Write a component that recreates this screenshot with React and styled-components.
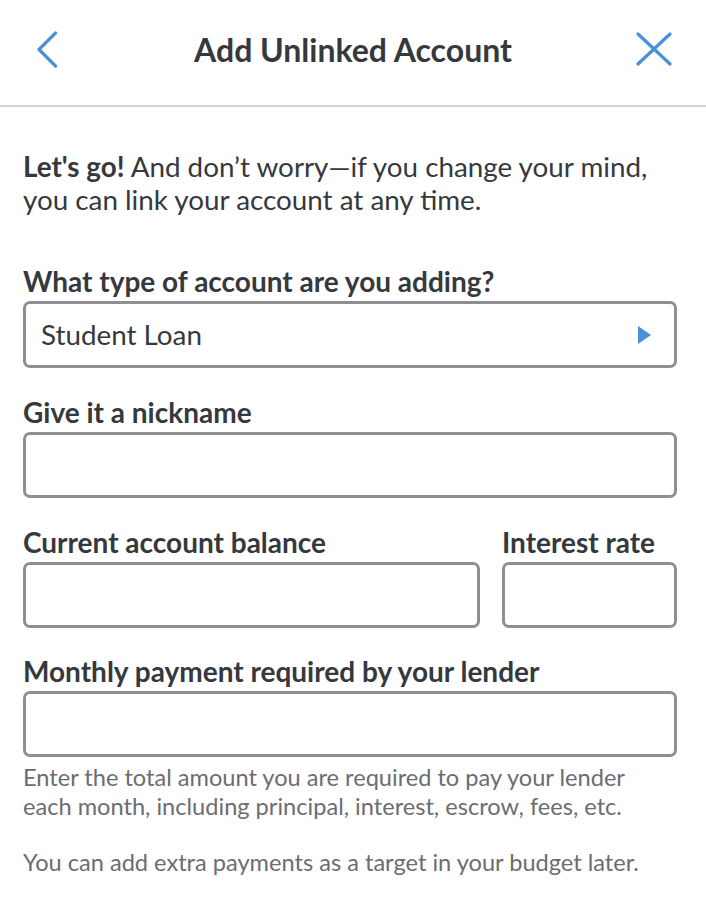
import React from "react";
import styled, { createGlobalStyle } from "styled-components";

const GlobalStyle = createGlobalStyle`
  body {
    margin: 0;
    background: #fff;
    font-family: Lato, "Open Sans", sans-serif;
    color: #35393e;
  }
  * {
    box-sizing: border-box;
  }
`;

const Header = styled.header`
  height: 107px;
  padding-bottom: 7px;
  border-bottom: 2px solid #d5d5d9;
  display: grid;
  grid-template-columns: 80px 1fr 80px;
  align-items: center;
`;

const IconButton = styled.button`
  border: none;
  background: none;
  padding: 0;
  height: 40px;
  display: flex;
  align-items: center;
  justify-content: ${(p) => (p.$right ? "flex-end" : "flex-start")};
  padding-left: ${(p) => (p.$right ? "0" : "36px")};
  padding-right: ${(p) => (p.$right ? "34px" : "0")};
  cursor: pointer;
`;

const Title = styled.h1`
  margin: 0;
  text-align: center;
  font-size: 32px;
  font-weight: 700;
  color: #35393e;
  white-space: nowrap;
`;

const Content = styled.main`
  padding: 43px 29px 40px 23px;
`;

const Intro = styled.p`
  margin: 0 0 50px;
  font-size: 27.8px;
  line-height: 33px;
  strong {
    font-weight: 700;
  }
`;

const Field = styled.div`
  display: flex;
  flex-direction: column;
  flex: ${(p) => p.$grow || "none"};
  width: ${(p) => p.$width || "auto"};
`;

const Row = styled.div`
  display: flex;
  gap: 22px;
  margin-bottom: 28px;
`;

const Group = styled.div`
  margin-bottom: ${(p) => (p.$last ? "0" : "29px")};
`;

const Label = styled.label`
  font-size: 28px;
  line-height: 30px;
  font-weight: 700;
  margin-bottom: 5px;
  white-space: nowrap;
`;

const Input = styled.input`
  width: 100%;
  height: 66px;
  border: 3px solid #8e8e93;
  border-radius: 7px;
  padding: 0 15px;
  font-family: inherit;
  font-size: 28px;
  color: #35393e;
  outline: none;
  background: #fff;
`;

const Select = styled.div`
  height: 67px;
  border: 3px solid #8e8e93;
  border-radius: 7px;
  padding: 0 23px 0 15px;
  display: flex;
  align-items: center;
  justify-content: space-between;
  font-size: 27.8px;
  cursor: pointer;
`;

const Caret = styled.span`
  width: 0;
  height: 0;
  border-top: 9px solid transparent;
  border-bottom: 9px solid transparent;
  border-left: 13px solid #4b8fd9;
`;

const Help = styled.p`
  margin: ${(p) => (p.$first ? "6px 0 27px" : "0")};
  font-size: 23.6px;
  line-height: 29px;
  color: #6b6d72;
`;

function BackIcon() {
  return (
    <svg width="22" height="37" viewBox="0 0 22 37" fill="none">
      <path d="M19.5 2 L3 18.5 L19.5 35" stroke="#4b8fd9" strokeWidth="3.2" strokeLinecap="round" strokeLinejoin="round" />
    </svg>
  );
}

function CloseIcon() {
  return (
    <svg width="36" height="34" viewBox="0 0 36 34" fill="none">
      <path d="M2 2 L34 32 M34 2 L2 32" stroke="#4b8fd9" strokeWidth="3.2" strokeLinecap="round" />
    </svg>
  );
}

export default function App() {
  return (
    <>
      <GlobalStyle />
      <Header>
        <IconButton aria-label="Back">
          <BackIcon />
        </IconButton>
        <Title>Add Unlinked Account</Title>
        <IconButton $right aria-label="Close">
          <CloseIcon />
        </IconButton>
      </Header>
      <Content>
        <Intro>
          <strong>Let's go!</strong> And don’t worry—if you change your mind,
          you can link your account at any time.
        </Intro>

        <Group>
          <Field>
            <Label>What type of account are you adding?</Label>
            <Select>
              <span>Student Loan</span>
              <Caret />
            </Select>
          </Field>
        </Group>

        <Group>
          <Field>
            <Label>Give it a nickname</Label>
            <Input type="text" />
          </Field>
        </Group>

        <Row>
          <Field $grow="1">
            <Label>Current account balance</Label>
            <Input type="text" />
          </Field>
          <Field $width="175px">
            <Label>Interest rate</Label>
            <Input type="text" />
          </Field>
        </Row>

        <Group $last>
          <Field>
            <Label>Monthly payment required by your lender</Label>
            <Input type="text" />
          </Field>
        </Group>

        <Help $first>
          Enter the total amount you are required to pay your lender each
          month, including principal, interest, escrow, fees, etc.
        </Help>
        <Help>You can add extra payments as a target in your budget later.</Help>
      </Content>
    </>
  );
}
